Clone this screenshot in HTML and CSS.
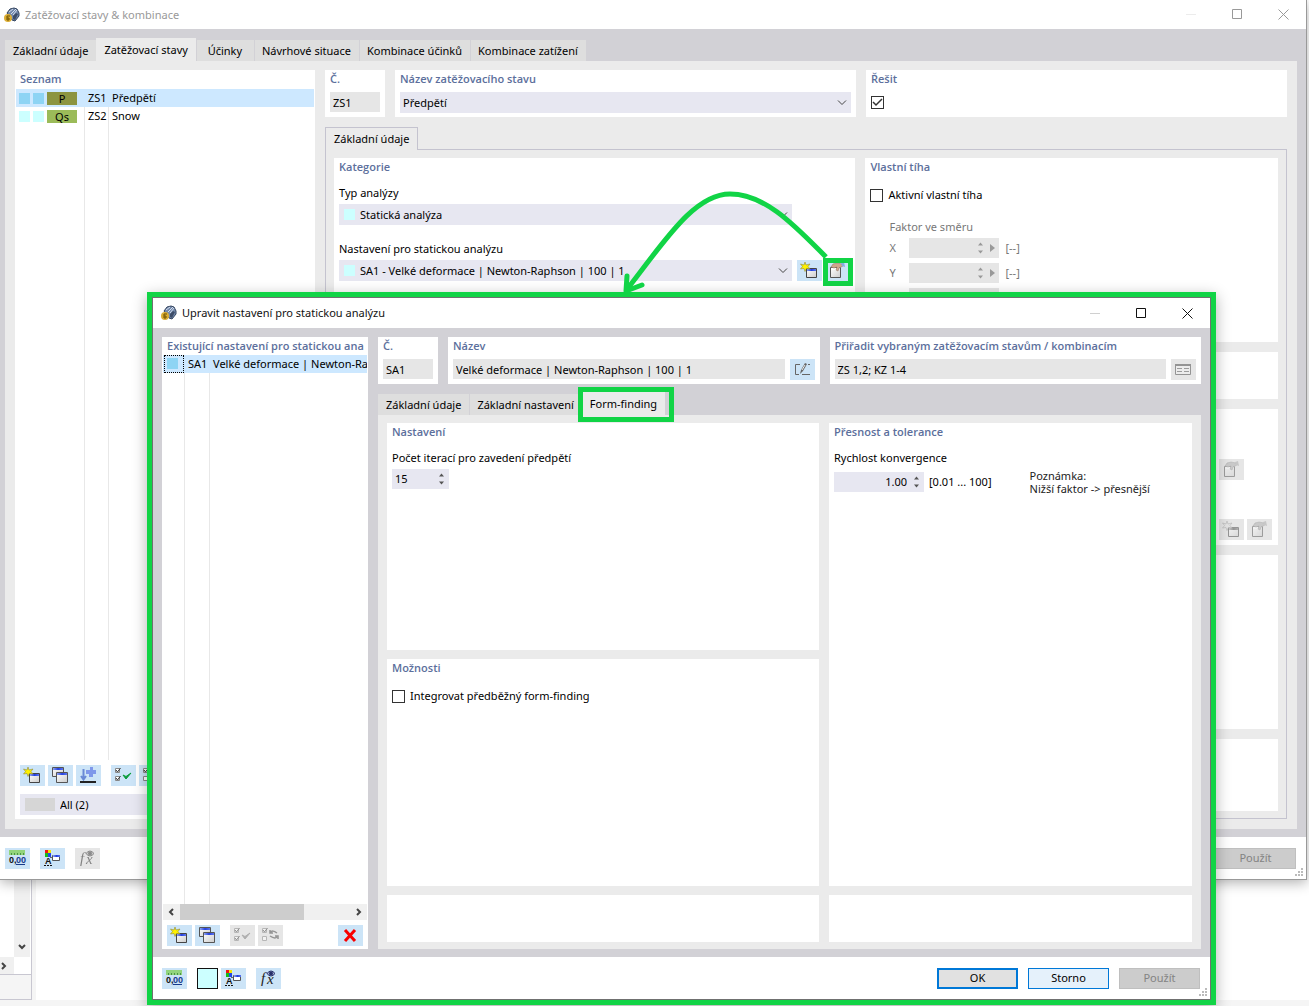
FILE: index.html
```html
<!DOCTYPE html>
<html lang="cs">
<head>
    <meta charset="UTF-8">
    <meta name="viewport" content="width=device-width, initial-scale=1.0">
    <title>Zatěžovací stavy &amp; kombinace</title>
    <link rel="stylesheet" href="styles.css">
</head>
<body>
    <svg class="sprite" aria-hidden="true">
        <linearGradient id="face" x1="0" y1="0" x2="1" y2="1">
            <stop offset="0" stop-color="#fff"/>
            <stop offset="1" stop-color="#ccc"/>
        </linearGradient>
        <linearGradient id="bar">
            <stop offset="0" stop-color="#8fa4f0"/>
            <stop offset=".5" stop-color="#2440e0"/>
            <stop offset="1" stop-color="#5b76ee"/>
        </linearGradient>
        <symbol id="i-app" viewBox="0 0 16 16">
            <path d="M3 6 6 2l4-1 3 1 2 4v3l-4 5-3-1z" fill="#7388ab" stroke="#33445f"/>
            <path d="M5 5l4-3M7 7l5-5M9 8l4-5" stroke="#d3deee"/>
            <path d="M9 12V9l3-3 2 1-3 6z" fill="#3d4c68"/>
            <circle cx="4" cy="11" r="4" fill="#dcae34"/>
            <path d="M6 9H3v4h2v-2H3" fill="none" stroke="#6d5000"/>
        </symbol>
        <symbol id="i-new" viewBox="0 0 25 21">
            <path d="M9.500 8.500h10v9h-10z" fill="url(#face)" stroke="#444"/>
            <path d="M10 9h9v2h-9z" fill="url(#bar)"/>
            <path d="M8 2l1 3 4-1-2 2.500 2 2.500-3.600-.6L8 11.500 7 8.500 3.500 9l2-2.500L3.500 4 7 5z" fill="#fff200" stroke="#8f8a3c" stroke-width=".6"/>
        </symbol>
        <symbol id="i-copy" viewBox="0 0 25 21">
            <path d="M4.500 2.500h11v9h-11z" fill="url(#face)" stroke="#555"/>
            <path d="M5 3h10v2H5z" fill="url(#bar)"/>
            <path d="M8.500 7.500h11v10h-11z" fill="url(#face)" stroke="#555"/>
            <path d="M9 8h10v2H9z" fill="url(#bar)"/>
        </symbol>
        <symbol id="i-edit" viewBox="0 0 25 21">
            <path d="M5.500 7.500h10v10h-10z" fill="url(#face)" stroke="#555"/>
            <path d="M6 8h5v2H6z" fill="#fff"/>
            <path d="M6 7l2-3 4-1 5 1 1 2-4 2-1 3-2-1 1-3-3 1z" fill="#d0a78b" stroke="#8d7060" stroke-width=".5"/>
            <path d="M16 3l3-1 1 5-3-1z" fill="#86aee0"/>
        </symbol>
        <symbol id="i-sort" viewBox="0 0 25 21">
            <path d="M14 2h3v3h3v4h-3v3h-4V9h-3V5h4z" fill="#7f98ea"/>
            <path d="M7.500 4v10M5 11l2.500 3.500L10 11" fill="none" stroke="#6a8ad6" stroke-width="2"/>
            <path d="M4 17h16" stroke="#222" stroke-width="2"/>
        </symbol>
        <symbol id="i-check" viewBox="0 0 25 21">
            <path d="M4.500 3.500h4v4h-4zM4.500 11.500h4v4h-4z" fill="#fff" stroke="#888"/>
            <path d="M5 5l1.500 2L9.500 3M5 13l1.500 2 3-4" fill="none" stroke="#333"/>
            <path d="M12 10l3 4 5-6-5 3.500z" fill="#0a9c3c" stroke="#0a9c3c" stroke-linejoin="round"/>
        </symbol>
        <symbol id="i-swap" viewBox="0 0 25 21">
            <path d="M4.500 3.500h4v4h-4zM4.500 11.500h4v4h-4z" fill="#fff" stroke="#888"/>
            <path d="M5 5l1.500 2L9.500 3" fill="none" stroke="#333"/>
            <path d="M12 8c2-3 4-2 7 0M19 12c-2 2-4 1-7-1M12 5v3h3M20 14v-3h-3" fill="none" stroke="#444" stroke-width="1.500"/>
        </symbol>
        <symbol id="i-delete" viewBox="0 0 25 21">
            <path d="M7 5l10 11M17 5 7 16" stroke="#f80000" stroke-width="3"/>
        </symbol>
        <symbol id="i-units" viewBox="0 0 25 21">
            <path d="M4 2h16v5H4z" fill="#92d47c"/>
            <path d="M6.500 5v2M9.500 5v2M12.500 5v2M15.500 5v2M18.500 5v2" stroke="#4b9446"/>
            <path d="M11 16.500h9" stroke="#173a8c"/>
        </symbol>
        <symbol id="i-display" viewBox="0 0 25 21">
            <path d="M5 2h3v3H5z" fill="#f01414"/>
            <path d="M8 2h3v3H8z" fill="#f2e600"/>
            <path d="M5 5h3v4H5z" fill="#18bd18"/>
            <path d="M8 5h3v4H8z" fill="#2346e8"/>
            <path d="M4 17.500h8" stroke="#111" stroke-dasharray="2 1"/>
            <path d="M10 9.500h2" stroke="#666"/>
            <path d="M12.500 7.500h7v5h-7z" fill="#fff" stroke="#555"/>
            <path d="M13 7h7v2h-7z" fill="url(#bar)"/>
        </symbol>
        <symbol id="i-eye" viewBox="0 0 25 21">
            <path d="M11 5.500q4-5 8 0-4 5-8 0z" fill="#aab2d8" stroke="#28306a"/>
            <circle cx="15" cy="5.500" r="2" fill="#28306a"/>
        </symbol>
        <symbol id="i-rename" viewBox="0 0 25 21">
            <path d="M10 5.500H5.500v10H9M12 15.500h8M18 5.500h2" fill="none" stroke="#666"/>
            <path d="M10 15l1-4 4-7 2 1-4 7z" fill="#666"/>
            <path d="M12 11l3-5" stroke="#eee"/>
        </symbol>
        <symbol id="i-list" viewBox="0 0 25 21">
            <path d="M4.500 5.500h15v10h-15z" fill="#f2f2f2" stroke="#444"/>
            <path d="M4 5h16v2H4z" fill="#444"/>
            <path d="M6 9.500h5M13 9.500h5M6 12.500h5M13 12.500h5" stroke="#555"/>
        </symbol>
        <symbol id="i-down" viewBox="0 0 10 6"><path d="M1 .5l4 4 4-4" fill="none" stroke="#444"/></symbol>
        <symbol id="i-spin" viewBox="0 0 5 12"><path d="M0 3.500 2.500.5 5 3.500zM0 8.500l2.500 3 2.500-3z" fill="currentColor"/></symbol>
        <symbol id="i-play" viewBox="0 0 5 8"><path d="M0 0l5 4-5 4z" fill="currentColor"/></symbol>
        <symbol id="i-arrow" viewBox="0 0 8 8"><path d="M2 1l3 3-3 3" fill="none" stroke="#444" stroke-width="2"/></symbol>
        <symbol id="i-min" viewBox="0 0 11 11"><path d="M0 5.500h10" stroke="#d0d0d0"/></symbol>
        <symbol id="i-max" viewBox="0 0 11 11"><path d="M.5.5h9v9h-9z" fill="none" stroke="currentColor"/></symbol>
        <symbol id="i-close" viewBox="0 0 11 11"><path d="M.5.5l10 10M10.500.5l-10 10" fill="none" stroke="currentColor"/></symbol>
        <symbol id="i-grip" viewBox="0 0 8 8"><path d="M6 0h2v2H6zM3 3h2v2H3zM6 3h2v2H6zM0 6h2v2H0zM3 6h2v2H3zM6 6h2v2H6z" fill="#bbb"/></symbol>
    </svg>

    <div class="desktop">
        <!-- document window at the back -->
        <div class="back-window">
            <div class="back-view">
                <div class="back-vscroll"><svg class="ic-arrow down"><use href="#i-arrow"/></svg></div>
                <div class="back-hscroll"><svg class="ic-arrow"><use href="#i-arrow"/></svg></div>
                <div class="back-status"></div>
            </div>
        </div>

        <!-- load cases and combinations -->
        <section class="window main-window">
            <header class="titlebar inactive">
                <svg class="ic-app"><use href="#i-app"/></svg>
                <h1>Zatěžovací stavy &amp; kombinace</h1>
                <button class="win-btn faint" aria-label="Minimalizovat"><svg><use href="#i-min"/></svg></button>
                <button class="win-btn" aria-label="Maximalizovat"><svg><use href="#i-max"/></svg></button>
                <button class="win-btn" aria-label="Zavřít"><svg><use href="#i-close"/></svg></button>
            </header>
            <div class="main-body">
                <nav class="tabs">
                    <button class="tab">Základní údaje</button>
                    <button class="tab active">Zatěžovací stavy</button>
                    <button class="tab">Účinky</button>
                    <button class="tab">Návrhové situace</button>
                    <button class="tab">Kombinace účinků</button>
                    <button class="tab">Kombinace zatížení</button>
                </nav>
                <div class="main-page">
                    <div class="panel case-list">
                        <h2>Seznam</h2>
                        <div class="list-area">
                            <table class="list">
                                <tr class="selected">
                                    <td class="col-tag"><span class="swatch"></span><span class="swatch"></span><span class="tag olive">P</span></td>
                                    <td class="col-id">ZS1</td>
                                    <td>Předpětí</td>
                                </tr>
                                <tr>
                                    <td class="col-tag"><span class="swatch"></span><span class="swatch"></span><span class="tag">Qs</span></td>
                                    <td class="col-id">ZS2</td>
                                    <td>Snow</td>
                                </tr>
                            </table>
                        </div>
                        <div class="toolbar">
                            <button class="tool" aria-label="Nový"><svg><use href="#i-new"/></svg></button>
                            <button class="tool" aria-label="Kopírovat"><svg><use href="#i-copy"/></svg></button>
                            <button class="tool" aria-label="Seřadit"><svg><use href="#i-sort"/></svg></button>
                            <button class="tool apart" aria-label="Vybrat vše"><svg><use href="#i-check"/></svg></button>
                            <button class="tool" aria-label="Obrátit výběr"><svg><use href="#i-swap"/></svg></button>
                        </div>
                        <div class="combo filter">
                            <span class="swatch"></span>
                            <select aria-label="Filtr"><option>All (2)</option></select>
                            <svg class="ic-down"><use href="#i-down"/></svg>
                        </div>
                    </div>

                    <div class="case-detail">
                        <div class="head-row">
                            <div class="panel">
                                <h2><label for="case-no">Č.</label></h2>
                                <input class="field" id="case-no" value="ZS1" readonly>
                            </div>
                            <div class="panel">
                                <h2><label for="case-name">Název zatěžovacího stavu</label></h2>
                                <div class="combo">
                                    <select id="case-name"><option>Předpětí</option></select>
                                    <svg class="ic-down"><use href="#i-down"/></svg>
                                </div>
                            </div>
                            <div class="panel">
                                <h2><label for="solve">Řešit</label></h2>
                                <div class="check-line"><input type="checkbox" id="solve" checked></div>
                            </div>
                        </div>
                        <div class="sub-tabs"><button class="sub-tab">Základní údaje</button></div>
                        <div class="sub-page">
                            <div class="panel category">
                                <h2>Kategorie</h2>
                                <label for="type">Typ analýzy</label>
                                <div class="field-row">
                                    <div class="combo with-swatch">
                                        <span class="swatch"></span>
                                        <select id="type"><option>Statická analýza</option></select>
                                        <svg class="ic-down"><use href="#i-down"/></svg>
                                    </div>
                                </div>
                                <label for="settings">Nastavení pro statickou analýzu</label>
                                <div class="field-row">
                                    <div class="combo with-swatch">
                                        <span class="swatch"></span>
                                        <select id="settings"><option>SA1 - Velké deformace | Newton-Raphson | 100 | 1</option></select>
                                        <svg class="ic-down"><use href="#i-down"/></svg>
                                    </div>
                                    <div class="toolbar">
                                        <button class="tool" aria-label="Nové nastavení"><svg><use href="#i-new"/></svg></button>
                                        <button class="tool marked" aria-label="Upravit nastavení"><svg><use href="#i-edit"/></svg></button>
                                    </div>
                                </div>
                            </div>
                            <div class="side">
                                <div class="panel weight">
                                    <h2>Vlastní tíha</h2>
                                    <div class="check-line">
                                        <input type="checkbox" id="self-weight">
                                        <label for="self-weight">Aktivní vlastní tíha</label>
                                    </div>
                                    <fieldset class="factors" disabled>
                                        <legend>Faktor ve směru</legend>
                                        <div class="factor"><label for="fx">X</label><div class="spin"><input id="fx"><svg class="ic-spin"><use href="#i-spin"/></svg><svg class="ic-play"><use href="#i-play"/></svg></div>[--]</div>
                                        <div class="factor"><label for="fy">Y</label><div class="spin"><input id="fy"><svg class="ic-spin"><use href="#i-spin"/></svg><svg class="ic-play"><use href="#i-play"/></svg></div>[--]</div>
                                        <div class="factor"><label for="fz"></label><div class="spin"><input id="fz" aria-label="Faktor ve směru Z"></div></div>
                                    </fieldset>
                                </div>
                                <div class="panel"></div>
                                <div class="panel side-tools">
                                    <div class="toolbar">
                                        <button class="tool" disabled aria-label="Upravit"><svg><use href="#i-edit"/></svg></button>
                                    </div>
                                    <div class="toolbar">
                                        <button class="tool" disabled aria-label="Nový"><svg><use href="#i-new"/></svg></button>
                                        <button class="tool" disabled aria-label="Upravit"><svg><use href="#i-edit"/></svg></button>
                                    </div>
                                </div>
                                <div class="panel"></div>
                                <div class="panel"></div>
                            </div>
                        </div>
                    </div>
                </div>
            </div>
            <footer class="footer">
                <button class="tool" aria-label="Jednotky"><svg><use href="#i-units"/><text x="4" y="15" class="num">0,</text><text x="11" y="15" class="num blue">00</text></svg></button>
                <button class="tool" aria-label="Zobrazení"><svg><use href="#i-display"/><text x="5" y="16" class="num">A</text></svg></button>
                <button class="tool" disabled aria-label="Funkce"><svg><text x="5" y="15" class="fx">f</text><text x="11" y="16" class="fx">x</text><use href="#i-eye"/></svg></button>
                <div class="actions"><button class="action" disabled>Použít</button></div>
                <svg class="ic-grip"><use href="#i-grip"/></svg>
            </footer>
        </section>

        <!-- static analysis settings dialog -->
        <section class="window dialog">
            <header class="titlebar">
                <svg class="ic-app"><use href="#i-app"/></svg>
                <h1>Upravit nastavení pro statickou analýzu</h1>
                <button class="win-btn" aria-label="Minimalizovat"><svg><use href="#i-min"/></svg></button>
                <button class="win-btn" aria-label="Maximalizovat"><svg><use href="#i-max"/></svg></button>
                <button class="win-btn" aria-label="Zavřít"><svg><use href="#i-close"/></svg></button>
            </header>
            <div class="dialog-body">
                <div class="panel settings-list">
                    <h2>Existující nastavení pro statickou ana</h2>
                    <div class="list-area">
                        <table class="list">
                            <tr class="selected">
                                <td class="col-tag"><span class="focus"><span class="swatch"></span></span></td>
                                <td class="col-id">SA1</td>
                                <td class="col-name">Velké deformace | Newton-Raphson | 100 | 1</td>
                            </tr>
                        </table>
                    </div>
                    <div class="hscroll">
                        <svg class="ic-arrow left"><use href="#i-arrow"/></svg>
                        <div class="track"><div class="thumb"></div></div>
                        <svg class="ic-arrow"><use href="#i-arrow"/></svg>
                    </div>
                    <div class="toolbar">
                        <button class="tool" aria-label="Nový"><svg><use href="#i-new"/></svg></button>
                        <button class="tool" aria-label="Kopírovat"><svg><use href="#i-copy"/></svg></button>
                        <button class="tool apart" disabled aria-label="Vybrat vše"><svg><use href="#i-check"/></svg></button>
                        <button class="tool" disabled aria-label="Obrátit výběr"><svg><use href="#i-swap"/></svg></button>
                        <button class="tool last" aria-label="Smazat"><svg><use href="#i-delete"/></svg></button>
                    </div>
                </div>

                <div class="settings-detail">
                    <div class="head-row">
                        <div class="panel">
                            <h2><label for="set-no">Č.</label></h2>
                            <input class="field" id="set-no" value="SA1" readonly>
                        </div>
                        <div class="panel">
                            <h2><label for="set-name">Název</label></h2>
                            <div class="name-row">
                                <input class="field" id="set-name" value="Velké deformace | Newton-Raphson | 100 | 1" readonly>
                                <button class="tool" aria-label="Přejmenovat"><svg><use href="#i-rename"/></svg></button>
                            </div>
                        </div>
                        <div class="panel">
                            <h2><label for="assign">Přiřadit vybraným zatěžovacím stavům / kombinacím</label></h2>
                            <div class="name-row">
                                <input class="field" id="assign" value="ZS 1,2; KZ 1-4" readonly>
                                <button class="tool" disabled aria-label="Seznam"><svg><use href="#i-list"/></svg></button>
                            </div>
                        </div>
                    </div>
                    <nav class="tabs">
                        <button class="tab">Základní údaje</button>
                        <button class="tab">Základní nastavení</button>
                        <button class="tab active marked">Form-finding</button>
                    </nav>
                    <div class="settings-page">
                        <div class="page-col">
                            <div class="panel">
                                <h2>Nastavení</h2>
                                <label for="iterations">Počet iterací pro zavedení předpětí</label>
                                <div class="spin short"><input id="iterations" value="15"><svg class="ic-spin"><use href="#i-spin"/></svg></div>
                            </div>
                            <div class="panel">
                                <h2>Možnosti</h2>
                                <div class="check-line">
                                    <input type="checkbox" id="integrate">
                                    <label for="integrate">Integrovat předběžný form-finding</label>
                                </div>
                            </div>
                            <div class="panel note-panel"></div>
                        </div>
                        <div class="page-col">
                            <div class="panel">
                                <h2>Přesnost a tolerance</h2>
                                <label for="speed">Rychlost konvergence</label>
                                <div class="speed-row">
                                    <div class="spin right"><input id="speed" value="1.00"><svg class="ic-spin"><use href="#i-spin"/></svg></div>
                                    <span class="range">[0.01 ... 100]</span>
                                    <p>Poznámka:<br>Nižší faktor -&gt; přesnější</p>
                                </div>
                            </div>
                            <div class="panel note-panel"></div>
                        </div>
                    </div>
                </div>
            </div>
            <footer class="footer">
                <button class="tool" aria-label="Jednotky"><svg><use href="#i-units"/><text x="4" y="15" class="num">0,</text><text x="11" y="15" class="num blue">00</text></svg></button>
                <button class="color-btn" aria-label="Barva"></button>
                <button class="tool" aria-label="Zobrazení"><svg><use href="#i-display"/><text x="5" y="16" class="num">A</text></svg></button>
                <button class="tool" aria-label="Funkce"><svg><text x="5" y="15" class="fx">f</text><text x="11" y="16" class="fx">x</text><use href="#i-eye"/></svg></button>
                <div class="actions">
                    <button class="action default">OK</button>
                    <button class="action hover">Storno</button>
                    <button class="action" disabled>Použít</button>
                </div>
                <svg class="ic-grip"><use href="#i-grip"/></svg>
            </footer>
        </section>

        <!-- arrow from the edit button to the dialog -->
        <svg class="pointer" viewBox="0 0 214 110" aria-hidden="true">
            <path d="M206 67C176 37 146 4 110 4 74 4 44 52 8 98" fill="none" stroke="#11d446" stroke-width="5"/>
            <path d="M7 86 6 101 22 95" fill="none" stroke="#11d446" stroke-width="5" stroke-linecap="round" stroke-linejoin="round"/>
        </svg>
    </div>
</body>
</html>
```
FILE: styles.css
```css
* {
    box-sizing: border-box;
}
body {
    margin: 0;
    font-family: "Noto Sans", "Open Sans", sans-serif;
    font-size: 11px;
    line-height: 16px;
    color: #000;
    background-color: #fff;
}
h1, h2, p {
    margin: 0;
}
button, input, select {
    font: inherit;
    color: inherit;
    margin: 0;
    padding: 0;
    border: 0;
    border-radius: 0;
}
svg {
    display: block;
}
.sprite {
    position: absolute;
    width: 0;
    height: 0;
}
.num {
    font: bold 9px "Liberation Sans", sans-serif;
    fill: #111;
}
.num.blue {
    fill: #173a8c;
}
.fx {
    font: italic 15px "Liberation Serif", serif;
    fill: #222;
}
.desktop {
    position: relative;
    height: 100vh;
    overflow: hidden;
}

/* windows */
.window {
    position: absolute;
    display: flex;
    flex-direction: column;
}
.main-window {
    top: 0;
    bottom: 126px;
    left: 0;
    right: 2px;
    border-right: 1px solid #999;
    border-bottom: 1px solid #999;
    background-color: #fff;
    box-shadow: 0 3px 12px rgba(0, 0, 0, 0.3);
}
.dialog {
    top: 292px;
    bottom: 1px;
    left: 147px;
    right: 93px;
    border: 5px solid #11d446;
    background-color: #fff;
    box-shadow: 0 4px 14px rgba(0, 0, 0, 0.3);
    outline: 1px solid #707070;
    outline-offset: -6px;
    padding: 1px;
}
.back-window {
    height: 100%;
    padding-bottom: 6px;
    background-color: #f5f5f5;
}
.back-view {
    display: grid;
    grid-template-columns: 14px 17px;
    grid-template-rows: 1fr 17px 26px;
    height: 100%;
    background: linear-gradient(90deg, #fff 31px, #c8c7d1 31px, #c8c7d1 32px, #f5f5f5 32px, #f5f5f5 36px, #fff 36px);
}
.back-vscroll {
    grid-column: 2;
    display: flex;
    align-items: flex-end;
    justify-content: center;
    padding-bottom: 6px;
    width: 16px;
    background-color: #f0f0f0;
}
.back-hscroll {
    grid-row: 2;
    display: flex;
    align-items: center;
    background-color: #f0f0f0;
}
.back-status {
    grid-row: 3;
    grid-column: 1 / 3;
    background-color: #f5f5f5;
    border: solid #c8c7d1;
    border-width: 1px 0;
}
.titlebar {
    display: flex;
    align-items: center;
    flex: none;
    height: 29px;
    padding-left: 4px;
}
.dialog .titlebar {
    height: 30px;
    padding-left: 8px;
    color: #111;
}
.titlebar.inactive {
    color: #999;
}
.titlebar h1 {
    flex: 1;
    margin-left: 5px;
    font-size: 11px;
    font-weight: normal;
}
.ic-app {
    width: 16px;
    height: 16px;
}
.win-btn {
    display: flex;
    align-items: center;
    justify-content: center;
    width: 46px;
    height: 28px;
    background: none;
}
.win-btn svg {
    width: 11px;
    height: 11px;
}
.win-btn.faint {
    opacity: 0.4;
}

/* tabs */
.tabs {
    display: flex;
    align-items: flex-end;
    height: 23px;
}
.tab {
    min-width: 58px;
    height: 21px;
    padding: 0 8px;
    background-color: #dedede;
    white-space: nowrap;
}
.tab + .tab {
    border-left: 1px solid #d2d1d6;
    padding-left: 7px;
}
.tab.active {
    height: 23px;
    padding: 0 8px;
    border: 0;
    background-color: #ebebeb;
}
.marked {
    position: relative;
}
.marked::after {
    content: "";
    position: absolute;
    inset: -2px -3px -5px -2px;
    border: 5px solid #11d446;
}
.tab.marked::after {
    inset: -5px -9px -7px -4px;
}

/* panels */
.panel {
    display: flex;
    flex-direction: column;
    min-width: 0;
    padding: 0 5px 5px;
    background-color: #fff;
}
.panel h2 {
    flex: none;
    height: 18px;
    line-height: 18px;
    font-family: "Open Sans", "Noto Sans", sans-serif;
    font-size: 11px;
    font-weight: 600;
    color: #5c6f9c;
    white-space: nowrap;
}
.head-row {
    display: grid;
    grid-template-columns: 60px 461fr 421fr;
    gap: 10px;
}
.head-row .panel {
    height: 47px;
}
.head-row h2 {
    margin-bottom: 4px;
}
.field {
    width: 100%;
    min-width: 0;
    height: 20px;
    padding: 0 3px;
    background-color: #e6e6e6;
}
.combo {
    position: relative;
    flex: 1;
    min-width: 0;
}
.combo select {
    display: block;
    width: 100%;
    height: 21px;
    padding: 0 20px 0 3px;
    appearance: none;
    background-color: #e7e7f1;
}
.combo.with-swatch select {
    padding-left: 21px;
}
.combo .swatch {
    position: absolute;
    top: 5px;
    left: 5px;
}
.ic-down {
    position: absolute;
    top: 8px;
    right: 4px;
    width: 10px;
    height: 6px;
    pointer-events: none;
}
.swatch {
    display: inline-block;
    width: 11px;
    height: 11px;
    background-color: #ccffff;
}
.selected .swatch {
    background-color: #8ed4f4;
}
input[type="checkbox"] {
    flex: none;
    width: 13px;
    height: 13px;
    appearance: none;
    border: 1px solid #333;
    background-color: #fff;
}
input[type="checkbox"]:checked {
    background-image: url("data:image/svg+xml,%3Csvg xmlns='http://www.w3.org/2000/svg' viewBox='0 0 11 11'%3E%3Cpath d='M1 5l3 3 6-6' fill='none' stroke='%23333' stroke-width='1.5'/%3E%3C/svg%3E");
}
.check-line {
    display: flex;
    align-items: center;
    gap: 5px;
    height: 20px;
}

/* toolbar buttons */
.toolbar {
    display: flex;
    gap: 3px;
}
.tool {
    flex: none;
    width: 25px;
    height: 21px;
    background-color: #cce4f7;
}
.tool svg {
    width: 25px;
    height: 21px;
}
.tool:disabled {
    background-color: #e6e6e6;
}
.tool:disabled svg {
    filter: grayscale(1);
    opacity: 0.5;
}
.tool.apart {
    margin-left: 7px;
}
.tool.last {
    margin-left: auto;
}

/* lists */
.list-area {
    flex: 1;
    overflow: hidden;
    margin: 1px -4px 0;
    background: linear-gradient(90deg, transparent 68px, #e8e8e8 68px, #e8e8e8 69px, transparent 69px, transparent 92px, #e8e8e8 92px, #e8e8e8 93px, transparent 93px);
}
.list {
    width: 100%;
    table-layout: fixed;
    border-collapse: collapse;
}
.list tr {
    height: 18px;
}
.list td {
    height: 18px;
    padding: 0 0 0 3px;
    line-height: 18px;
    white-space: nowrap;
}
.list .selected {
    background-color: #cde8ff;
}
.list .col-tag {
    width: 69px;
    font-size: 0;
}
.list .col-id {
    width: 24px;
}
.list .col-name {
    overflow: hidden;
}
.list .swatch {
    margin-right: 3px;
    vertical-align: middle;
}
.tag {
    display: inline-block;
    width: 30px;
    height: 13px;
    font-size: 11px;
    line-height: 13px;
    text-align: center;
    vertical-align: middle;
    background-color: #9bbb59;
}
.tag.olive {
    background-color: #8c9440;
}

/* load cases window */
.main-body {
    flex: 1;
    display: flex;
    flex-direction: column;
    min-height: 0;
    padding: 9px 9px 8px 5px;
    background-color: #d2d1d6;
}
.main-page {
    flex: 1;
    display: flex;
    gap: 10px;
    min-height: 0;
    padding: 9px 10px 10px;
    background-color: #ebebeb;
}
.case-list {
    flex: none;
    width: 300px;
    padding-bottom: 4px;
}
.case-list .toolbar {
    margin: 5px 0 8px;
}
.filter {
    flex: none;
}
.filter .swatch {
    top: 4px;
    width: 30px;
    height: 13px;
    background-color: #d6d6d6;
}
.filter select {
    padding-left: 40px;
}
.case-detail {
    flex: 1;
    display: flex;
    flex-direction: column;
    min-width: 0;
}
.sub-tabs {
    display: flex;
    margin: 10px 0 -1px;
}
.sub-tab {
    height: 23px;
    padding: 0 8px;
    border: 1px solid #c4c3cf;
    border-bottom: 0;
    background-color: #ebebeb;
    z-index: 1;
}
.sub-page {
    flex: 1;
    display: grid;
    grid-template-columns: 522fr 413fr;
    gap: 10px;
    min-height: 0;
    padding: 8px 8px 7px;
    border: 1px solid #c4c3cf;
}
.category label {
    margin-top: 9px;
}
.category .field-row + label {
    margin-top: 16px;
}
.field-row {
    display: flex;
    flex: none;
    gap: 5px;
    margin-top: 3px;
}
.field-row .combo:last-child {
    margin-right: 58px;
}
.side {
    display: grid;
    grid-template-rows: 184px 47px 136px 1fr 72px;
    gap: 10px;
}
.weight .check-line {
    margin-top: 9px;
}
.factors {
    margin: 14px 0 0;
    padding: 0 0 0 19px;
    border: 0;
    color: #777;
}
.factors legend {
    margin-bottom: 3px;
    padding: 0;
}
.factor {
    display: flex;
    align-items: center;
    gap: 6px;
    margin-bottom: 5px;
}
.factor label {
    width: 14px;
}
.factor .spin {
    background-color: #e6e6e6;
    color: #999;
}
.spin {
    display: flex;
    align-items: center;
    gap: 7px;
    flex: none;
    width: 90px;
    height: 20px;
    padding: 0 5px 0 3px;
    background-color: #e7e7f1;
    color: #555;
}
.factor .spin {
    padding-right: 4px;
}
.spin input {
    flex: 1;
    width: 0;
    background: none;
    color: #000;
}
.spin.short {
    width: 57px;
}
.spin.right input {
    text-align: right;
}
.ic-spin {
    width: 5px;
    height: 12px;
}
.ic-play {
    width: 5px;
    height: 8px;
}
.side-tools {
    justify-content: flex-end;
    gap: 39px;
}
.side-tools .toolbar {
    padding-left: 349px;
}

/* footer */
.footer {
    position: relative;
    flex: none;
    display: flex;
    align-items: center;
    gap: 10px;
    height: 42px;
    padding: 0 10px 0 5px;
}
.dialog .footer {
    padding: 0 10px 0 9px;
}
.actions {
    display: flex;
    gap: 10px;
    margin-left: auto;
}
.action {
    width: 81px;
    height: 21px;
    border: 1px solid #adadad;
    background-color: #e1e1e1;
}
.action:disabled {
    border-color: #bfbfbf;
    background-color: #ccc;
    color: #838383;
}
.action.default {
    border: 2px solid #0078d7;
}
.action.hover {
    border-color: #0078d7;
    background-color: #e5f1fb;
}
.ic-grip {
    position: absolute;
    right: 3px;
    bottom: 3px;
    width: 8px;
    height: 8px;
}
.color-btn {
    width: 21px;
    height: 21px;
    border: 1px solid #111;
    background-color: #ccffff;
}
.color-btn + .tool {
    margin-left: -7px;
}

/* dialog */
.dialog-body {
    flex: 1;
    display: flex;
    gap: 10px;
    min-height: 0;
    padding: 9px 9px 8px;
    background-color: #d2d1d6;
}
.settings-list {
    flex: none;
    width: 206px;
    padding-bottom: 3px;
}
.settings-list .list-area {
    margin: 0 -4px;
    background: linear-gradient(90deg, transparent 21px, #e8e8e8 21px, #e8e8e8 22px, transparent 22px, transparent 46px, #e8e8e8 46px, #e8e8e8 47px, transparent 47px);
}
.settings-list .list .col-tag {
    width: 22px;
    padding-left: 1px;
}
.settings-list .list .col-id {
    width: 25px;
}
.focus {
    display: block;
    width: 20px;
    height: 18px;
    padding: 2px;
    border: 1px dotted #000;
}
.focus .swatch {
    display: block;
}
.hscroll {
    display: flex;
    align-items: center;
    flex: none;
    height: 16px;
    margin: 0 -4px 5px;
    padding: 0 4px;
    gap: 5px;
    background-color: #f0f0f0;
}
.track {
    flex: 1;
    height: 16px;
}
.thumb {
    width: 73%;
    height: 16px;
    background-color: #cdcdcd;
}
.ic-arrow {
    width: 8px;
    height: 8px;
}
.ic-arrow.left {
    transform: rotate(180deg);
}
.ic-arrow.down {
    transform: rotate(90deg);
}
.settings-detail {
    flex: 1;
    display: flex;
    flex-direction: column;
    min-width: 0;
}
.settings-detail .head-row {
    grid-template-columns: 60px 1fr 1fr;
}
.name-row {
    display: flex;
    gap: 5px;
}
.settings-detail .tabs {
    margin-top: 8px;
}
.settings-page {
    flex: 1;
    display: grid;
    grid-template-columns: 432fr 363fr;
    gap: 10px;
    min-height: 0;
    padding: 8px 9px 7px;
    background-color: #ebebeb;
}
.page-col {
    display: flex;
    flex-direction: column;
    gap: 9px;
}
.page-col .panel {
    flex: 1;
}
.page-col .note-panel {
    flex: none;
    height: 47px;
}
.page-col h2 + label {
    margin-top: 9px;
}
.page-col .check-line {
    margin-top: 9px;
}
.page-col .spin.short {
    margin-top: 3px;
}
.speed-row {
    display: flex;
    align-items: center;
    gap: 5px;
    margin-top: 3px;
}
.speed-row p {
    margin-left: 33px;
    line-height: 13px;
    color: #222;
}
.pointer {
    position: absolute;
    top: 190px;
    left: 620px;
    width: 214px;
    height: 110px;
    pointer-events: none;
}
```
